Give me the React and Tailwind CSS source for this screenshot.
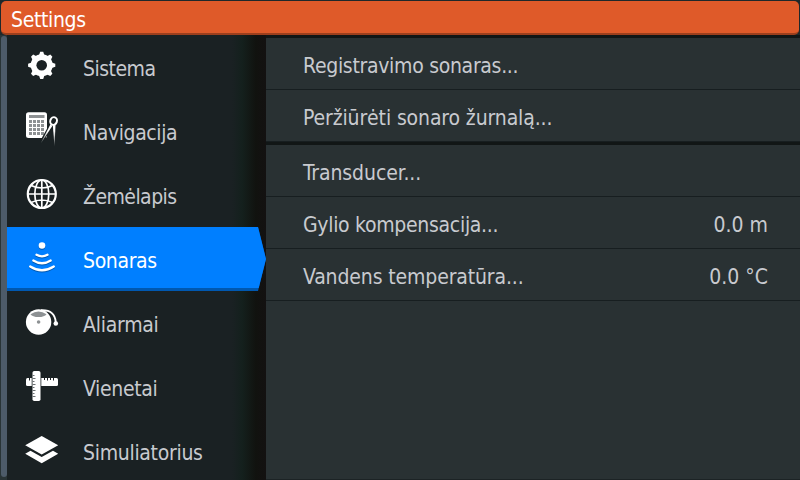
import { clsx } from 'clsx';

function GearIcon() {
  return (
    <svg width="36" height="36" viewBox="0 0 36 36">
      <g fill="#fff">
        {[0, 45, 90, 135].map((a) => (
          <path key={a} d="M16.200 4.700h3l1.700 5v17.200l-1.700 5h-3l-1.700-5v-17.200z" transform={`rotate(${a} 17.700 18.300)`} />
        ))}
        <circle cx="17.700" cy="18.300" r="11" />
      </g>
      <circle cx="17.700" cy="18.300" r="5.300" fill="#1a2123" />
    </svg>
  );
}

function NavigationIcon() {
  return (
    <svg width="36" height="36" viewBox="0 0 36 36">
      <defs>
        <linearGradient id="leg" x1="0" y1="14" x2="0" y2="35" gradientUnits="userSpaceOnUse">
          <stop offset="0.3" stopColor="#fff" />
          <stop offset="1" stopColor="#fff" stopOpacity="0.300" />
        </linearGradient>
      </defs>
      <rect x="2" y="1.200" width="21" height="25.800" rx="2.500" fill="#fff" />
      <rect x="5" y="4" width="15.500" height="3" fill="#8d9193" />
      {[9, 13, 17, 21].map((y) =>
        [5, 9, 13, 17].map((x) => <rect key={`${x}-${y}`} x={x} y={y} width="3" height="3" fill="#8d9193" />)
      )}
      <path d="M27 14L17.500 31" stroke="#1a2123" strokeWidth="3.500" />
      <path d="M26.300 13.500L17 32L28.500 14.700z" fill="url(#leg)" />
      <path d="M28.800 14L30.500 35.500L31.500 14z" fill="url(#leg)" />
      <ellipse cx="29.600" cy="10" rx="3.300" ry="3.900" transform="rotate(20 29.600 10)" fill="#1a2123" stroke="#fff" strokeWidth="2" />
    </svg>
  );
}

function GlobeIcon() {
  return (
    <svg width="36" height="36" viewBox="0 0 36 36" fill="none" stroke="#fff" strokeWidth="1.700">
      <circle cx="17.800" cy="19" r="14" strokeWidth="2.200" />
      <ellipse cx="17.800" cy="19" rx="7" ry="14" />
      <path d="M17.800 5v28M4 19h28M7 10.500Q17.800 15.500 28.600 10.500M7 27.500Q17.800 22.500 28.600 27.500" />
    </svg>
  );
}

function SonarIcon() {
  return (
    <svg width="36" height="36" viewBox="0 0 36 36" className="drop-shadow-[0_1px_0_#0058b0]">
      <circle cx="18" cy="6.500" r="3.300" fill="#fff" />
      <g fill="none" stroke="#fff" strokeWidth="2.300" strokeLinecap="round">
        <path d="M12.500 15.800Q18 19 23.500 15.800" />
        <path d="M9.300 21.500Q18 27 26.700 21.500" />
        <path d="M6.200 27.500Q18 35 29.800 27.500" />
      </g>
    </svg>
  );
}

function AlarmIcon() {
  return (
    <svg width="36" height="36" viewBox="0 0 36 36">
      <circle cx="14.600" cy="19" r="12.700" fill="#fff" />
      <path d="M6.500 11.200Q14.500 6 22.500 11.200Q20.500 14 14.500 14Q8.500 14 6.500 11.200z" fill="#8d9193" />
      <circle cx="14.600" cy="19" r="1.800" fill="#8d9193" />
      <path d="M17 7.200Q30.500 6.500 31.800 19" fill="none" stroke="#fff" strokeWidth="1.900" />
      <circle cx="31.800" cy="20.500" r="2.300" fill="#fff" />
    </svg>
  );
}

function UnitsIcon() {
  return (
    <svg width="36" height="36" viewBox="0 0 36 36">
      <rect x="2" y="11" width="32" height="8" rx="1.500" fill="#fff" />
      <path d="M5.500 11v2.500M20.500 11v2M23.500 11v2.500M26.500 11v2M29.500 11v2.500" stroke="#1a2123" />
      <rect x="7.700" y="3.500" width="9.600" height="31" rx="2" fill="#1a2123" />
      <rect x="8.500" y="4" width="8" height="30" rx="1.800" fill="#fff" />
      <path d="M8.500 8.500h2M8.500 11.500h3M8.500 14.500h2M8.500 17.500h3M8.500 20.500h2M8.500 23.500h3M8.500 26.500h2M8.500 29.500h3" stroke="#6b7072" />
    </svg>
  );
}

function LayersIcon() {
  return (
    <svg width="36" height="36" viewBox="0 0 36 36" fill="#fff">
      <path d="M17.700 5L34.200 14.300L17.700 23.600L1.200 14.300z" />
      <path d="M1.200 22.700L6.500 19.700L17.700 26L29 19.700L34.200 22.700L17.700 32.200z" />
    </svg>
  );
}

const menu = [
  { label: 'Sistema', icon: GearIcon, tracking: 'tracking-[-0.5px]' },
  { label: 'Navigacija', icon: NavigationIcon, tracking: 'tracking-[-0.4px]' },
  { label: 'Žemėlapis', icon: GlobeIcon, tracking: 'tracking-[-0.55px]' },
  { label: 'Sonaras', icon: SonarIcon, tracking: 'tracking-[-0.35px]', active: true },
  { label: 'Aliarmai', icon: AlarmIcon, tracking: 'tracking-[-0.25px]' },
  { label: 'Vienetai', icon: UnitsIcon, tracking: 'tracking-[-0.35px]' },
  { label: 'Simuliatorius', icon: LayersIcon, tracking: 'tracking-[-0.3px]' },
];

const groups = [
  [
    { label: 'Registravimo sonaras...', tracking: 'tracking-[-0.3px]' },
    { label: 'Peržiūrėti sonaro žurnalą...', tracking: 'tracking-[-0.12px]' },
  ],
  [
    { label: 'Transducer...', tracking: 'tracking-[-0.1px]' },
    { label: 'Gylio kompensacija...', tracking: 'tracking-[-0.3px]', value: '0.0 m' },
    { label: 'Vandens temperatūra...', tracking: 'tracking-[-0.13px]', value: '0.0 °C' },
  ],
];

function MenuItem({ label, icon: Icon, tracking, active }) {
  return (
    <li className="relative flex h-16 shrink-0 items-center pl-[17px]">
      {active && (
        <svg className="absolute top-0 left-0" width="259" height="64" viewBox="0 0 259 64">
          <path d="M0 0H251L259 32L251 64H0z" fill="#0058b0" />
          <path d="M0 0H251L259 32L251.700 61H0z" fill="#007fff" />
        </svg>
      )}
      <span className="relative -mt-1">
        <Icon />
      </span>
      <span className={clsx('relative ml-[23px] pt-[3px]', tracking, active ? 'text-white' : 'text-[#c8cacf]')}>{label}</span>
    </li>
  );
}

function Row({ label, tracking, value }) {
  return (
    <li className="flex h-[52px] items-center justify-between border-b border-[#171e20] pr-8 pl-[37px] pt-1">
      <span className={tracking}>{label}</span>
      <span>{value}</span>
    </li>
  );
}

export default function App() {
  return (
    <div className="flex h-[480px] w-[800px] flex-col overflow-hidden bg-[#1a2123] font-['DejaVu_Sans_Condensed','DejaVu_Sans',sans-serif] text-[21px] leading-7 font-stretch-condensed text-[#c8cacf]">
      <header className="shrink-0 bg-[#1f282a] px-px pt-px">
        <h1 className="h-[34px] rounded-[5px] border-b-2 border-[#9c3f1d] bg-[#df5a29] pt-[5px] pl-2.5 tracking-[-0.35px] text-white">Settings</h1>
      </header>
      <div className="flex min-h-0 flex-1">
        <div className="w-[7px] shrink-0 bg-[#293436] pt-px pl-px">
          <div className="h-[441px] w-[6px] rounded-full bg-[#4d5b69]" />
        </div>
        <ul className="w-[259px] shrink-0 bg-[linear-gradient(to_right,#1a2123_225px,#14201d_235px,#11120f_249px,#131111_259px)]">
          {menu.map((item) => (
            <MenuItem key={item.label} {...item} />
          ))}
        </ul>
        <main className="flex-1 border-t-3 border-b border-t-[#111616] border-b-[#1c2325] bg-[#293133]">
          {groups.map((rows, i) => (
            <ul key={i} className={clsx(i > 0 && 'border-t-[3px] border-[#111616]')}>
              {rows.map((row) => (
                <Row key={row.label} {...row} />
              ))}
            </ul>
          ))}
        </main>
      </div>
    </div>
  );
}
